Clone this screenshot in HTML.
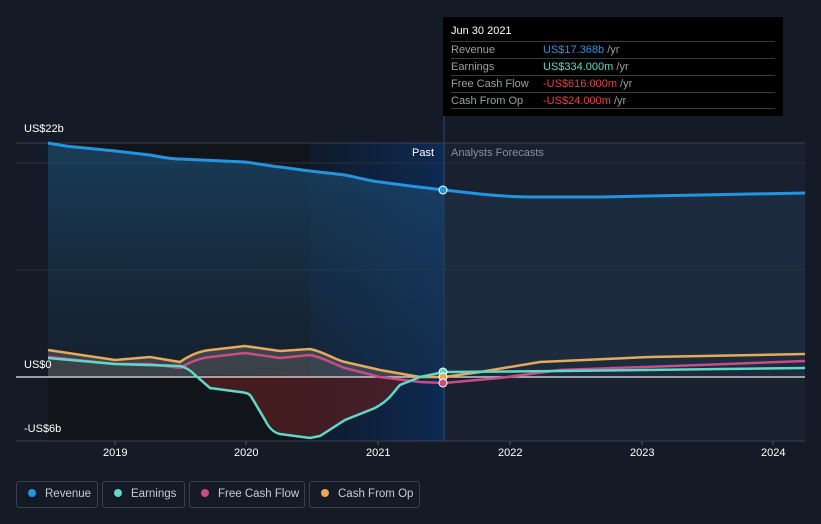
<!DOCTYPE html>
<html><head><meta charset="utf-8"><style>
html,body{margin:0;width:821px;height:524px;overflow:hidden}
body{background:#151b26;font-family:"Liberation Sans",sans-serif;position:relative}
.t{position:absolute;color:#fff;font-size:11px}
.tip{position:absolute;left:443px;top:17px;width:340px;height:99px;background:#000;}
.tip .row{position:absolute;left:8px;width:324px;height:16px;border-top:1px solid #3a3a3a;font-size:11px;color:#9aa0a6;line-height:16px}
.leg{position:absolute;top:481px;height:27px;border:1px solid #3a4150;border-radius:3px;color:#c8ccd2;font-size:11.5px;line-height:25px;box-sizing:border-box;white-space:nowrap}
.leg i{display:inline-block;width:8px;height:8px;border-radius:50%;margin:0 9px 0 11px;vertical-align:0px}
</style></head><body>
<svg width="821" height="524" style="position:absolute;left:0;top:0">
<defs>
<linearGradient id="pb" x1="0" x2="1"><stop offset="0" stop-color="#0f1a2a"/><stop offset="1" stop-color="#0d2a52"/></linearGradient>
<linearGradient id="rv" x1="0" y1="0" x2="0" y2="1"><stop offset="0" stop-color="#1b4a6e" stop-opacity=".75"/><stop offset="1" stop-color="#1b3550" stop-opacity=".35"/></linearGradient>
</defs>
<rect x="48" y="143" width="262" height="298" fill="#111419"/>
<rect x="310" y="143" width="134" height="298" fill="url(#pb)"/>
<rect x="444" y="143" width="361" height="298" fill="#192130"/>
<line x1="16" y1="143" x2="805" y2="143" stroke="#3a414d"/>
<line x1="16" y1="163" x2="805" y2="163" stroke="#2a313d"/>
<line x1="16" y1="270" x2="805" y2="270" stroke="#2a313d"/>
<line x1="16" y1="441" x2="805" y2="441" stroke="#3a414d"/>
<line x1="444" y1="17" x2="444" y2="441" stroke="#2a4a7a"/>
<path d="M48,143 C60,145 70,147 75,147 L115,151 L150,155 C165,158 175,159 180,159 L245,162 C260,164 270,166 280,167 L310,171 L345,175 C360,178 370,181 380,182 L410,186 L444,190 L444,377 L48,377Z" fill="url(#rv)"/>
<path d="M444,190 L480,194 C500,196 515,197 530,197 L600,197 L700,195 L805,193 L805,377 L444,377Z" fill="#1e3448" opacity=".6"/>
<path d="M48,350 L115,360 L150,357 L180,362 C190,355 200,351 210,350 L245,346 L280,351 L310,349 C325,352 335,360 345,362 L380,370 L420,377 L420,377 L48,377Z" fill="#6a6a6a" opacity=".45"/>
<path d="M195,375 L210,388 L240,392 L250,396 L265,420 L280,434 L310,438 L320,436 L345,420 L375,408 L400,385 L410,377Z" fill="#5a1e22" opacity=".7"/>
<path d="M48,143 C60,145 70,147 75,147 L115,151 L150,155 C165,158 175,159 180,159 L245,162 C260,164 270,166 280,167 L310,171 L345,175 C360,178 370,181 380,182 L410,186 L444,190 L480,194 C500,196 515,197 530,197 L600,197 L700,195 L805,193" fill="none" stroke="#2394e0" stroke-width="3"/>
<line x1="16" y1="377" x2="805" y2="377" stroke="#c8c8c8" stroke-width="1.5"/>
<path d="M48,350 L115,360 L150,357 L180,362 C190,355 200,351 210,350 L245,346 L280,351 L310,349 C325,352 335,360 345,362 L380,370 L420,377 L444,377 L480,372 L540,362 L650,357 L805,354" fill="none" stroke="#e8a95a" stroke-width="2.5"/>
<path d="M48,357 L115,364 L150,364 L180,368 C190,362 200,358 210,357 L245,353 L280,358 L310,355 C325,358 335,365 345,368 L380,377 L420,382 L444,383 L500,378 L560,370 L700,365 L805,361" fill="none" stroke="#c84d85" stroke-width="2.5"/>
<path d="M48,358 L115,364 L180,366 C188,368 192,372 195,375 L210,388 L240,392 C248,393 250,394 252,398 L265,420 C270,430 275,433 280,434 L310,438 L320,436 L345,420 L375,408 C390,400 395,390 400,385 L420,377 L444,372 L560,371 L805,368" fill="none" stroke="#5fd8c8" stroke-width="2.5"/>
<circle cx="443" cy="190" r="4" fill="#2394e0" stroke="#fff"/>
<circle cx="443" cy="372" r="4" fill="#5fd8c8" stroke="#fff"/>
<circle cx="443" cy="377" r="4" fill="#e8a95a" stroke="#fff"/>
<circle cx="443" cy="383" r="4" fill="#c84d85" stroke="#fff"/>
<g stroke="#555" ><line x1="115" y1="441" x2="115" y2="445"/><line x1="246" y1="441" x2="246" y2="445"/><line x1="378" y1="441" x2="378" y2="445"/><line x1="510" y1="441" x2="510" y2="445"/><line x1="642" y1="441" x2="642" y2="445"/><line x1="773" y1="441" x2="773" y2="445"/></g>
</svg>
<div class="t" style="left:24px;top:123px">US$22b</div>
<div class="t" style="left:24px;top:359px">US$0</div>
<div class="t" style="left:24px;top:423px">-US$6b</div>
<div class="t" style="left:412px;top:147px">Past</div>
<div class="t" style="left:451px;top:147px;color:#8a9099">Analysts Forecasts</div>
<div class="t" style="left:103px;top:447px">2019</div>
<div class="t" style="left:234px;top:447px">2020</div>
<div class="t" style="left:366px;top:447px">2021</div>
<div class="t" style="left:498px;top:447px">2022</div>
<div class="t" style="left:630px;top:447px">2023</div>
<div class="t" style="left:761px;top:447px">2024</div>
<div class="tip">
<div style="position:absolute;left:8px;top:8px;color:#fff;font-size:11px">Jun 30 2021</div>
<div class="row" style="top:24px">Revenue<span style="position:absolute;left:92px;color:#2394e0">US$17.368b <span style="color:#9aa0a6">/yr</span></span></div>
<div class="row" style="top:41px">Earnings<span style="position:absolute;left:92px;color:#5fd8c8">US$334.000m <span style="color:#9aa0a6">/yr</span></span></div>
<div class="row" style="top:58px">Free Cash Flow<span style="position:absolute;left:92px;color:#e84040">-US$616.000m <span style="color:#9aa0a6">/yr</span></span></div>
<div class="row" style="top:75px">Cash From Op<span style="position:absolute;left:92px;color:#e84040">-US$24.000m <span style="color:#9aa0a6">/yr</span></span></div>
<div style="position:absolute;left:8px;top:91px;width:324px;border-top:1px solid #3a3a3a"></div>
</div>
<div class="leg" style="left:16px;width:82px"><i style="background:#2394e0"></i>Revenue</div>
<div class="leg" style="left:102px;width:83px"><i style="background:#5fd8c8"></i>Earnings</div>
<div class="leg" style="left:189px;width:116px"><i style="background:#c84d85"></i>Free Cash Flow</div>
<div class="leg" style="left:309px;width:111px"><i style="background:#e8a95a"></i>Cash From Op</div>
</body></html>
